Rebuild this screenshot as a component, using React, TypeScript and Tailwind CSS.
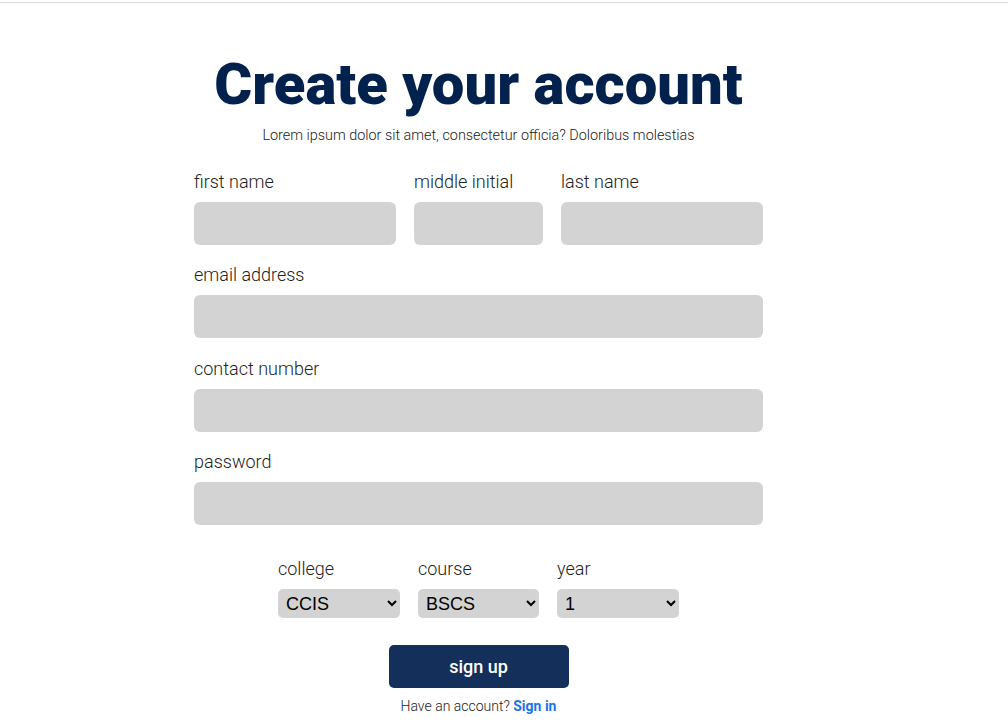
import React from 'react';

const Field = ({ label, className = '' }: { label: string; className?: string }) => (
  <div className={`flex flex-col ${className}`}>
    <label className="text-[18px] leading-[27px] font-light text-[#222] mb-[7px]">{label}</label>
    <input type="text" className="h-[43px] w-full rounded-md bg-[#d3d3d3] outline-none px-3" />
  </div>
);

const Dropdown = ({ label, options, className = 'w-[122px]' }: { label: string; options: string[]; className?: string }) => (
  <div className={`flex flex-col ${className}`}>
    <label className="text-[18px] leading-[27px] font-light text-[#222] mb-[7px]">{label}</label>
    <select className="h-[29px] w-full rounded-[5px] bg-[#d3d3d3] pl-1 font-['Liberation_Sans',Arial,sans-serif] text-[18px] text-black">
      {options.map((o) => (
        <option key={o}>{o}</option>
      ))}
    </select>
  </div>
);

export default function App() {
  return (
    <div className="min-h-screen bg-white font-['Roboto',sans-serif]">
      <div className="pt-[2px]">
        <div className="h-px bg-[#d9d9d9]" />
      </div>

      <div className="ml-[194px] w-[569px] pt-[45px]">
        <h1 className="text-center text-[58px] leading-[72px] font-black text-[#02214d]">Create your account</h1>
        <p className="mt-[6px] text-center text-[14.4px] leading-[20px] font-light text-[#222]">
          Lorem ipsum dolor sit amet, consectetur officia? Doloribus molestias
        </p>

        <form className="mt-[22px]" onSubmit={(e) => e.preventDefault()}>
          <div className="grid grid-cols-[202px_129px_202px] gap-x-[18px]">
            <Field label="first name" />
            <Field label="middle initial" />
            <Field label="last name" />
          </div>
          <Field label="email address" className="mt-[16px]" />
          <Field label="contact number" className="mt-[17px]" />
          <Field label="password" className="mt-[16px]" />

          <div className="mt-[30px] flex justify-center gap-[18px]">
            <Dropdown label="college" options={['CCIS', 'CBA', 'COE']} />
            <Dropdown label="course" options={['BSCS', 'BSIT', 'BSIS']} className="w-[121px]" />
            <Dropdown label="year" options={['1', '2', '3', '4']} />
          </div>

          <div className="mt-[27px] flex justify-center">
            <button type="submit" className="h-[43px] w-[180px] rounded-[5px] bg-[#142f5a] text-[18px] font-medium text-white">
              sign up
            </button>
          </div>
          <p className="mt-[8px] text-center text-[14px] leading-[20px] font-light text-[#222]">
            Have an account? <a href="#" className="font-bold text-[#1a73e8]">Sign in</a>
          </p>
        </form>
      </div>
    </div>
  );
}
